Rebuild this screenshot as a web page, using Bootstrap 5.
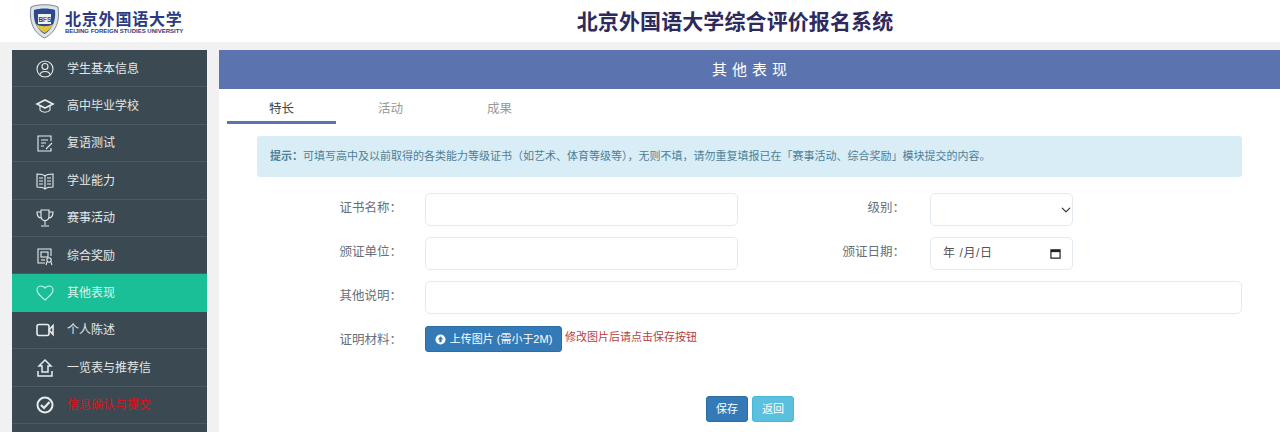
<!DOCTYPE html>
<html lang="zh-CN">
<head>
    <meta charset="UTF-8">
    <meta name="viewport" content="width=device-width, initial-scale=1.0">
    <title>北京外国语大学综合评价报名系统</title>
    <link href="https://cdn.jsdelivr.net/npm/bootstrap@5.3.0/dist/css/bootstrap.min.css" rel="stylesheet">
    <style>
        html, body { height: 432px; overflow: hidden; }
        body { background: #f1f1f1; font-family: "Liberation Sans", "Noto Sans CJK SC", sans-serif; font-size: 12px; color: #555; }
        .top-head { height: 42px; background: #fff; }
        .logo-box { width: 220px; padding-left: 29px; gap: 5px; }
        .logo-cn { font-family: "Noto Sans CJK SC", serif; font-size: 16px; font-weight: 700; line-height: 20px; color: #2b3a80; letter-spacing: .8px; white-space: nowrap; }
        .logo-en { font-size: 6px; font-weight: 700; line-height: 7px; color: #2b3a80; white-space: nowrap; }
        .sys-title { width: 1030px; padding-top: 2px; font-size: 21px; letter-spacing: .1px; font-weight: 700; color: #2d2a5c; text-align: center; }
        .page-body { padding: 8px 0 0 12px; gap: 12px; }
        .side-menu { width: 195px; height: 382px; background: #3b4a52; flex: none; }
        .side-item { height: 37.4px; padding: 1px 0 0 23px; gap: 12px; color: #e2e7e8; border-bottom: 1px solid #4b5a61; }
        .side-item.on { background: #1abf98; border-bottom-color: #1abf98; color: #d9f6ee; }
        .side-item svg { width: 20px; height: 20px; flex: none; fill: none; stroke: #e8eced; stroke-width: 1.1; }
        .side-item.on svg { stroke: #c4f6e8; }
        .side-alert { color: #d9141e; }
        .main-panel { height: 382px; background: #fff; min-width: 0; }
        .panel-bar { height: 39px; padding: 2px 0 0 5px; background: #5b73ae; color: #fff; font-size: 15px; letter-spacing: 5px; }
        .tab-row { padding: 7px 0 0 8px; }
        .tab-link { width: 109px; height: 28px; text-align: center; font-size: 12.5px; color: #999; line-height: 27px; }
        .tab-link.on { color: #444; border-bottom: 3px solid #5b73ae; }
        .tip-box { margin: 12px 38px 0 38px; height: 41px; background: #d9edf7; color: #4d7f96; font-size: 11px; border-radius: 3px; padding-left: 13px; }
        .form-line { margin-top: 11px; margin-right: 38px; height: 33px; }
        .form-line.first-line { margin-top: 16px; }
        .form-line.upload-line { margin-top: 12px; height: 26px; }
        .form-label-txt { font-size: 12.5px; color: #667079; text-align: right; flex: none; padding-bottom: 3px; }
        .upload-line .form-label-txt { padding-bottom: 0; padding-top: 2px; }
        .lb-a { width: 183px; margin-right: 23px; }
        .lb-b { width: 167px; margin-right: 25px; }
        .fld-a { width: 313px; flex: none; }
        .fld-b { width: 143px; flex: none; }
        .form-control.slim, .form-select.slim { height: 33px; min-height: 33px; border-color: #e3ebf0; font-size: 12px; padding: 0 12px; border-radius: 5px; }
        .form-select.slim { background-position: right 1px center; background-size: 10px 10px; }
        .date-fake { color: #555; }
        .date-fake span { padding-bottom: 1px; letter-spacing: .6px; }
        .date-fake svg { width: 11px; height: 11px; margin-right: -1px; }
        .upload-btn { width: 137px; height: 26px; padding: 0; font-size: 11px; background: #337ab7; border-color: #2e6da4; border-radius: 3px; }
        .upload-btn svg { width: 11px; height: 11px; }
        .red-tip { font-size: 11px; color: #b5403f; margin: 0 0 3px 3px; }
        .act-row { margin-top: 44px; padding-left: 487px; gap: 4px; }
        .act-btn { width: 42px; height: 26px; padding: 0; font-size: 11px; color: #fff; border-radius: 3px; }
        .act-save { background: #337ab7; border-color: #2e6da4; }
        .act-back { background: #5bc0de; border-color: #46b8da; }
    </style>
</head>
<body>
    <!-- 顶部 -->
    <div class="top-head d-flex align-items-center">
        <div class="logo-box d-flex align-items-center">
            <svg width="31" height="36" viewBox="0 0 31 36">
                <path d="M2 4C8 1 23 1 29 4C31 16 28 29 15.500 35C3 29 0 16 2 4Z" fill="#dfe3e8" stroke="#7a8597"/>
                <path d="M5 7C11 5 20 5 26 7C27 17 24 26 15.500 31C7 26 4 17 5 7Z" fill="#2b4a8e"/>
                <path d="M9 11H22V21H9Z" fill="#f2f2ee"/>
                <path d="M7 21C11 24 20 24 24 21C23 25 19 28 15.500 30C12 28 8 25 7 21Z" fill="#e3c23c"/>
                <text x="9.500" y="19" font-size="6.500" font-weight="700" fill="#2b3a80">B</text>
                <text x="14" y="19" font-size="6.500" font-weight="700" fill="#b23a3a">F</text>
                <text x="18" y="19" font-size="6.500" font-weight="700" fill="#2b3a80">S</text>
            </svg>
            <div>
                <div class="logo-cn">北京外国语大学</div>
                <div class="logo-en">BEIJING FOREIGN STUDIES UNIVERSITY</div>
            </div>
        </div>
        <div class="sys-title">北京外国语大学综合评价报名系统</div>
    </div>

    <div class="page-body d-flex">
        <!-- 左侧菜单 -->
        <div class="side-menu">
            <div class="side-item d-flex align-items-center"><svg viewBox="0 0 20 20"><circle cx="10" cy="10" r="8"/><circle cx="10" cy="7.500" r="3"/><path d="M5 15.500C6 11.500 14 11.500 15 15.500"/></svg>学生基本信息</div>
            <div class="side-item d-flex align-items-center"><svg viewBox="0 0 20 20"><path d="M2 8L10 4L18 8L10 12Z" style="stroke-width:1.600"/><path d="M5 10V14C7 17 13 17 15 14V10"/></svg>高中毕业学校</div>
            <div class="side-item d-flex align-items-center"><svg viewBox="0 0 20 20"><path d="M16 8V3H3V18H16V15"/><path d="M6 7H13M6 10H11M6 13H9"/><path d="M11 16L17 10"/></svg>复语测试</div>
            <div class="side-item d-flex align-items-center"><svg viewBox="0 0 20 20"><path d="M10 5C8 3 5 3 2 3V16C5 16 8 16 10 18C12 16 15 16 18 16V3C15 3 12 3 10 5V18"/><path d="M4 7H8M4 10H8M4 13H8M12 7H16M12 10H16M12 13H16"/></svg>学业能力</div>
            <div class="side-item d-flex align-items-center"><svg viewBox="0 0 20 20"><path d="M6 2H14V8C14 14 6 14 6 8Z"/><path d="M6 4H2C2 8 4 10 6.500 10M14 4H18C18 8 16 10 13.500 10M10 13V17M6 18H14"/></svg>赛事活动</div>
            <div class="side-item d-flex align-items-center"><svg viewBox="0 0 20 20"><path d="M10 17H3V3H16V10"/><rect x="6" y="6" width="7" height="5"/><path d="M6 14H10"/><circle cx="14" cy="14" r="2.200"/><path d="M12 16L11 19M16 16L17 19"/></svg>综合奖励</div>
            <div class="side-item on d-flex align-items-center"><svg viewBox="0 0 20 20"><path d="M10 17C4 12 2 10 2 7C2 4 4.500 3 6 3C8 3 9 4 10 5C11 4 12 3 14 3C15.500 3 18 4 18 7C18 10 16 12 10 17Z"/></svg>其他表现</div>
            <div class="side-item d-flex align-items-center"><svg viewBox="0 0 20 20"><rect x="2" y="4.500" width="12" height="11" rx="2" style="stroke-width:1.600"/><path d="M18 5.500V14.500L14 10Z" style="stroke-width:1.600"/></svg>个人陈述</div>
            <div class="side-item d-flex align-items-center"><svg viewBox="0 0 20 20"><path d="M10 2L4 8H7V14H13V8H16Z" style="stroke-width:1.500"/><path d="M3 13V18H17V13" style="stroke-width:1.500"/></svg>一览表与推荐信</div>
            <div class="side-item side-alert d-flex align-items-center"><svg viewBox="0 0 20 20"><circle cx="10" cy="10" r="7.500" style="stroke-width:2"/><path d="M6 10L9 13L14.500 7" style="stroke-width:2.200"/></svg>信息确认与提交</div>
        </div>

        <!-- 右侧内容 -->
        <div class="main-panel flex-grow-1">
            <div class="panel-bar d-flex align-items-center justify-content-center">其他表现</div>
            <div class="tab-row d-flex">
                <div class="tab-link on">特长</div>
                <div class="tab-link">活动</div>
                <div class="tab-link">成果</div>
            </div>
            <div class="tip-box d-flex align-items-center"><b>提示：</b>可填写高中及以前取得的各类能力等级证书（如艺术、体育等级等），无则不填，请勿重复填报已在「赛事活动、综合奖励」模块提交的内容。</div>

            <div class="form-line first-line d-flex align-items-center">
                <div class="form-label-txt lb-a">证书名称：</div>
                <input type="text" class="form-control slim fld-a">
                <div class="form-label-txt lb-b">级别：</div>
                <select class="form-select slim fld-b"><option></option></select>
            </div>
            <div class="form-line d-flex align-items-center">
                <div class="form-label-txt lb-a">颁证单位：</div>
                <input type="text" class="form-control slim fld-a">
                <div class="form-label-txt lb-b">颁证日期：</div>
                <div class="form-control slim date-fake fld-b d-flex align-items-center justify-content-between">
                    <span>年 /月/日</span>
                    <svg viewBox="0 0 12 12"><path d="M1 2H11V11H1Z" fill="none" stroke="#222" stroke-width="1.300"/><path d="M1 2H11V4.500H1Z" fill="#222"/></svg>
                </div>
            </div>
            <div class="form-line d-flex align-items-center">
                <div class="form-label-txt lb-a">其他说明：</div>
                <input type="text" class="form-control slim flex-grow-1">
            </div>
            <div class="form-line upload-line d-flex align-items-center">
                <div class="form-label-txt lb-a">证明材料：</div>
                <button class="btn btn-primary upload-btn d-flex align-items-center justify-content-center gap-1">
                    <svg viewBox="0 0 12 12"><circle cx="6" cy="6" r="5.500" fill="#fff"/><path d="M6 2.500L9 6H7.200V9H4.800V6H3Z" fill="#337ab7"/></svg>上传图片 (需小于2M)
                </button>
                <span class="red-tip">修改图片后请点击保存按钮</span>
            </div>
            <div class="act-row d-flex">
                <button class="btn act-btn act-save">保存</button>
                <button class="btn act-btn act-back">返回</button>
            </div>
        </div>
    </div>
    <script src="https://cdn.jsdelivr.net/npm/bootstrap@5.3.0/dist/js/bootstrap.bundle.min.js"></script>
</body>
</html>
